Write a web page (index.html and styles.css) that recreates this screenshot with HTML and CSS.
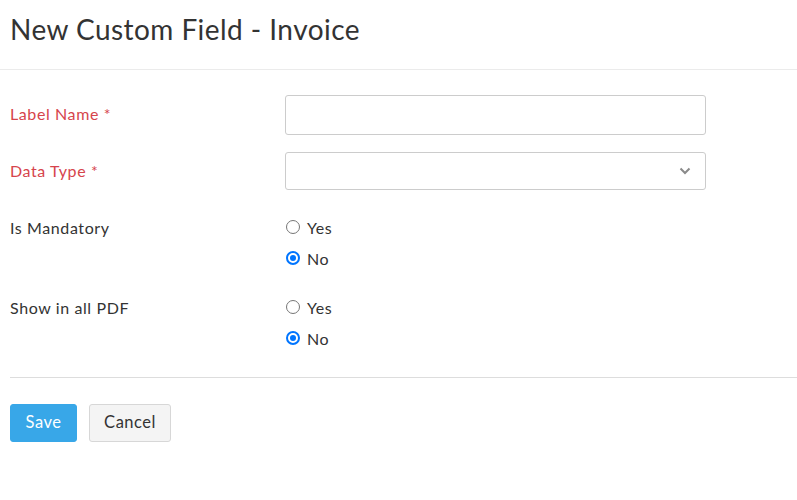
FILE: index.html
```html
<!DOCTYPE html>
<html>
<head>
<meta charset="utf-8">
<link rel="stylesheet" href="styles.css">
</head>
<body>
<div class="page">
  <div class="header"><h1 class="title">New Custom Field - Invoice</h1></div>
  <form class="form">
    <div class="row row-input">
      <label class="label required">Label Name *</label>
      <div class="field"><input class="text-input" type="text"></div>
    </div>
    <div class="row row-select">
      <label class="label required">Data Type *</label>
      <div class="field">
        <div class="select">
          <svg class="chev" width="12" height="8" viewBox="0 0 12 8"><path d="M1.5 1.5 L6 6 L10.5 1.5" fill="none" stroke="#8a8a8a" stroke-width="2"/></svg>
        </div>
      </div>
    </div>
    <div class="row row-radio">
      <label class="label">Is Mandatory</label>
      <div class="field radios">
        <label class="radio"><span class="dot"></span>Yes</label>
        <label class="radio"><span class="dot on"></span>No</label>
      </div>
    </div>
    <div class="row row-radio">
      <label class="label">Show in all PDF</label>
      <div class="field radios">
        <label class="radio"><span class="dot"></span>Yes</label>
        <label class="radio"><span class="dot on"></span>No</label>
      </div>
    </div>
    <div class="footer">
      <button type="button" class="btn btn-primary">Save</button>
      <button type="button" class="btn btn-default">Cancel</button>
    </div>
  </form>
</div>
</body>
</html>
```
FILE: styles.css
```css
* { box-sizing: border-box; }
body { margin: 0; background: #fff; font-family: Lato, "Open Sans", sans-serif; color: #333; }
.header { height: 70px; border-bottom: 1px solid #ebebeb; padding: 11px 10px 0; }
.title { margin: 0; font-size: 28px; font-weight: 400; color: #333; line-height: 36px; letter-spacing: 0.45px; }
.form { padding: 25px 0 0 10px; }
.row { display: flex; }
.label { width: 275px; font-size: 16px; letter-spacing: 0.6px; color: #333; }
.label.required { color: #d6444c; }
.field { width: 421px; }
.row-input { height: 57px; }
.row-input .label { padding-top: 9px; }
.text-input { width: 421px; height: 40px; border: 1px solid #ccc; border-radius: 3px; display: block; }
.row-select { height: 57px; }
.row-select .label { padding-top: 9px; }
.select { width: 421px; height: 38px; border: 1px solid #ccc; border-radius: 3px; display: flex; align-items: center; justify-content: flex-end; padding-right: 14px; }
.row-radio { height: 80px; }
.row-radio .label { padding-top: 9px; }
.radios { display: flex; flex-direction: column; gap: 11px; padding-top: 8px; }
.radio { display: flex; align-items: center; font-size: 16px; letter-spacing: 0.5px; height: 20px; color: #333; }
.dot { width: 14px; height: 14px; border: 1px solid #767676; border-radius: 50%; margin-right: 7px; margin-left: 1px; position: relative; flex: none; }
.dot.on { border: 2px solid #0075ff; }
.dot.on::after { content: ""; position: absolute; left: 2px; top: 2px; width: 6px; height: 6px; border-radius: 50%; background: #0075ff; }
.footer { border-top: 1px solid #ddd; margin-top: 8px; padding-top: 26px; display: flex; gap: 12px; }
.btn { height: 38px; border-radius: 3px; font-family: inherit; font-size: 16.5px; letter-spacing: 0.5px; padding: 0 0 3px; }
.btn-primary { background: #38a7e8; border: 1px solid #38a7e8; color: #fff; width: 67px; }
.btn-default { background: #f4f4f4; border: 1px solid #d7d7d7; color: #333; width: 82px; }
```
